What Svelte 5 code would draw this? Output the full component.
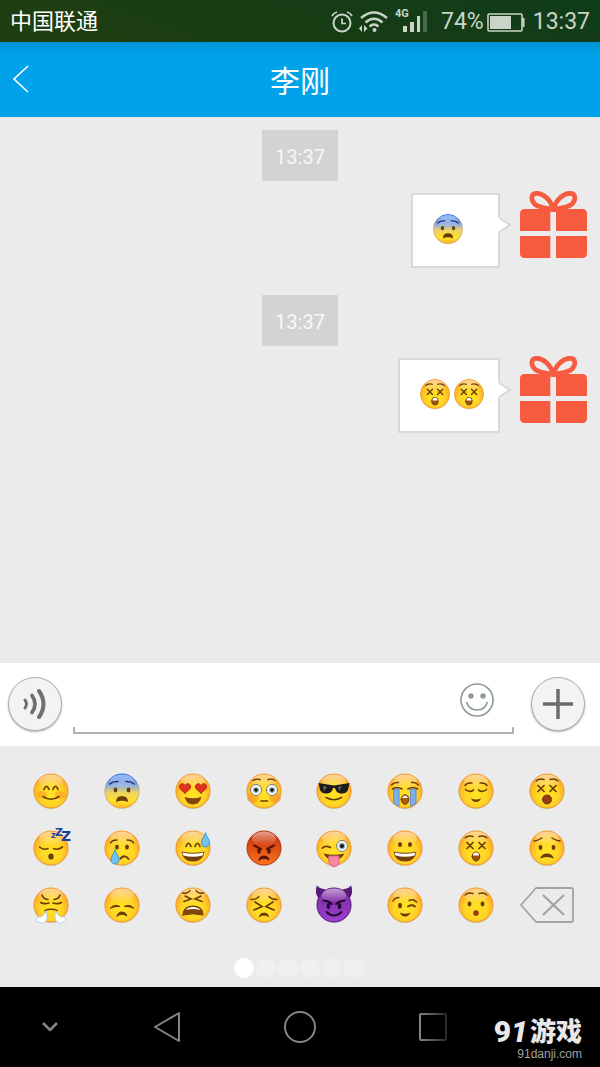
<script>
  const BROWN = "#6b3d06";
  const NAVY = "#2b2f6e";

  const line = (d, stroke = BROWN, width = 1.6) => ({ d, stroke, width });
  const area = (d, fill = BROWN, stroke = "none") => ({ d, fill, stroke, width: 1 });
  const oval = (x, y, rx, ry, fill = BROWN, stroke = "none") =>
    area(`M${x - rx} ${y}a${rx} ${ry} 0 1 0 ${rx * 2} 0a${rx} ${ry} 0 1 0 ${-rx * 2} 0z`, fill, stroke);
  const heart = (x, y) =>
    area(`M${x} ${y + 5}c-4-3-6-4.500-5.500-7c1-3 4-3 5.500-0.500c1.500-2.500 4.500-2.500 5.500 0.500c0.500 2.500-1.500 4-5.500 7z`, "#e2341d", "#b32512");
  const drop = (x, y) =>
    area(`M${x} ${y - 7}c1 4 4 6 4 9.500a4 4.500 0 0 1-8 0c0-3.500 3-5.500 4-9.500z`, "#6fc5f0", "#3a94cf");
  const crosses = () => line("M11 14.500l6 6m0-6l-6 6M23 14.500l6 6m0-6l-6 6", BROWN, 1.7);
  const brows = () => line("M9 10Q12 7 17 8.500M23 8.500Q28 7 31 10", BROWN, 1.4);
  const wideEye = x => [
    oval(x, 19, 5.5, 5.5, "#fff", "#777"),
    oval(x, 19, 3, 3, "#9ab4bb"),
    oval(x, 19, 1.8, 1.8, "#111")
  ];
  const laugh = () => [
    area("M8.500 23.500Q20 26 31.500 23.500Q30 33.500 20 33.500T8.500 23.500z", "#73400a"),
    area("M9.500 24.500Q20 27 30.500 24.500L29.500 27.500Q20 30 10.500 27.500z", "#fff")
  ];

  const faces = {
    blush: [
      oval(11, 24, 5, 4, "#f9802466"), oval(29, 24, 5, 4, "#f9802466"),
      line("M13 18.500Q15.500 12 18 18.500M22 18.500Q24.500 12 27 18.500M12 25.500Q20 31 28 25.500")
    ],
    fearful: [
      line("M8 13Q11 10 16 10.500M24 10.500Q29 10 32 13", NAVY, 1.6),
      oval(13.5, 19, 1.9, 2.4), oval(26.5, 19, 1.9, 2.4),
      area("M14 31Q14 25 20 25T26 31Q20 28.500 14 31z")
    ],
    heart_eyes: [
      heart(12, 17), heart(28, 17),
      area("M11.500 26Q20 28.500 28.500 26Q26.500 33.500 20 33.500T11.500 26z", "#82440c")
    ],
    flushed: [
      oval(9, 27, 6, 5, "#f5752466"), oval(31, 27, 6, 5, "#f5752466"),
      line("M9 9.500Q12 7.500 16 8.500M24 8.500Q28 7.500 31 9.500", BROWN, 1.4),
      ...wideEye(12), ...wideEye(28),
      line("M17 30H23.500")
    ],
    sunglasses: [
      area("M4.500 12Q12 13 20 14.500Q28 13 35.500 12L34 19Q32 23 27 22.500Q22 22 21 17H19Q18 22 13 22.500Q8 23 6 19z", "#1c1c1c"),
      area("M9 15L13 16L10 20z", "#666"), area("M24 16L28 15L25 20z", "#666"),
      line("M12 26.500Q20 31 27.500 26.500")
    ],
    sob: [
      area("M9 18H14V35Q11 34 9 32z", "#7fb0ea", "#5c8bd0"),
      area("M26 18H31V32Q29 34 26 35z", "#7fb0ea", "#5c8bd0"),
      line("M6.500 14Q9 11 13.500 11.500M26.500 11.500Q31 11 33.500 14", BROWN, 1.4),
      line("M7.500 18Q12 15 17 18M23 18Q28 15 32.500 18"),
      oval(20, 28.5, 3.8, 4.8, "#b05a10", BROWN), area("M17 27Q20 22 23 27z", "#fff")
    ],
    relieved: [
      line("M9 14.500Q11 11.500 16 12M24 12Q29 11.500 31 14.500", BROWN, 1.4),
      line("M9.500 18.500Q13.500 22 17.500 19M22.500 19Q26.500 22 30.500 18.500"),
      area("M15 27.500Q20 29.500 25 27.500Q23.500 31 20 31T15 27.500z")
    ],
    dizzy: [brows(), crosses(), oval(20, 28.5, 4.5, 4.5, "#943c0d", BROWN)],
    sleeping: [
      line("M8.500 19Q12.500 22.500 17 20.500M22.500 20.500Q27 22.500 31.500 19"),
      oval(20, 28.5, 2.7, 3.1)
    ],
    cry: [
      line("M8.500 15Q10 12 15 12M25 12Q30 12 31.500 15", BROWN, 1.4),
      oval(15, 19, 1.9, 2.6), oval(25, 19, 1.9, 2.6),
      line("M18.500 30.500Q23 26 26.500 31", BROWN, 2), drop(13, 29)
    ],
    sweat_smile: [
      line("M13 18.500Q15.500 12 18 18.500M22 18.500Q24.500 12 27 18.500"), ...laugh(), drop(32.5, 12)
    ],
    rage: [
      line("M10 17.500L17 21M30 17.500L23 21", "#571208", 2),
      oval(15, 23, 1.8, 2.8, "#571208"), oval(25, 23, 1.8, 2.8, "#571208"),
      area("M15 32Q15.500 28 20 28T25 32Q20 28.500 15 32z", "#571208", "#571208")
    ],
    tongue: [
      line("M8.500 20Q11 17 16.500 19.500", BROWN, 1.8),
      oval(28, 18, 5.5, 5.5, "#fff", "#777"), oval(28, 18, 3.3, 3.3, "#9ab4bb"), oval(28, 18, 2, 2, "#111"),
      area("M9.500 25.500Q20 28 30.500 25.500Q27.500 32 20 32T9.500 25.500z"),
      area("M15 28H25V34A5 4.500 0 0 1 15 34z", "#f789a4", "#dc5f7d")
    ],
    grinning: [oval(15, 16.5, 2, 2.5), oval(25, 16.5, 2, 2.5), ...laugh()],
    astonished: [
      brows(), crosses(),
      oval(20, 28.5, 3.8, 4.5, "#a4500d", BROWN), area("M17 27.500Q17 24.500 20 24.500T23 27.500z", "#fff")
    ],
    worried: [
      line("M7 13Q11 12.500 15 10M25 10Q29 12.500 33 13", BROWN, 1.4),
      oval(13.5, 19.5, 1.9, 2.4), oval(26.5, 19.5, 1.9, 2.4),
      area("M13 30.500Q15 25.500 20 25.500T27 30.500Q20 27.500 13 30.500z")
    ],
    triumph: [
      line("M11 10Q12 14 17 14.500M29 10Q28 14 23 14.500M9.500 17.500Q13 19.500 18 18M30.500 17.500Q27 19.500 22 18"),
      line("M14 25.500Q20 23 26 25.500"),
      area("M15.500 26Q17 34 14 37Q11 40 8.500 37Q4 38 5.500 33.500Q7 31 10 32Q14 30 15.500 26z", "#fff", "#b6cede"),
      area("M24.500 26Q23 34 26 37Q29 40 31.500 37Q36 38 34.500 33.500Q33 31 30 32Q26 30 24.500 26z", "#fff", "#b6cede")
    ],
    disappointed: [
      area("M8.500 23Q12 18.500 18 21.500Q13 21 8.500 23zM31.500 23Q28 18.500 22 21.500Q27 21 31.500 23z", BROWN, BROWN),
      area("M15 31Q16 27 20 27T25 31Q20 27.500 15 31z", BROWN, BROWN)
    ],
    tired: [
      line("M9.500 8Q15 9 17 5.500M30.500 8Q25 9 23 5.500", BROWN, 1.4),
      line("M12 11L18 14L11 16.500M28 11L22 14L29 16.500"),
      area("M10 30Q10 21 20 21T30 30Q20 27.500 10 30z", "#82440c", BROWN),
      area("M12.500 25Q15 22 20 22T27.500 25Q20 23 12.500 25z", "#fff")
    ],
    persevere: [
      line("M7 14.500Q12 15 15 11.500M33 14.500Q28 15 25 11.500", BROWN, 1.4),
      line("M11 17L18 21.500L10 25M29 17L22 21.500L30 25", BROWN, 1.8),
      area("M15.500 31.500Q16 28 20 28T24.500 31.500Q20 28.500 15.500 31.500z", BROWN, BROWN)
    ],
    imp: [
      line("M9.500 15.500Q15 16 18 19M30.500 15.500Q25 16 22 19", "#210630", 1.8),
      oval(14.5, 21, 1.8, 3, "#210630"), oval(25.5, 21, 1.8, 3, "#210630"),
      line("M12.500 27Q20 34 27.500 27", "#210630", 2)
    ],
    wink: [
      line("M8 16Q10 12.500 14 12.500M24 15.500Q28 13.500 31.500 17", BROWN, 1.5),
      oval(15, 20.5, 2, 2.7), line("M23 21.500Q27 19 30 21.500", BROWN, 1.8),
      area("M15 27.500Q20 30 25.500 27.500Q24 31.500 20 31.500T15 27.500z")
    ],
    hushed: [brows(), oval(13.5, 19, 1.9, 2.4), oval(26.5, 19, 1.9, 2.4), oval(20, 28, 2.8, 2.8, "#943c0d")]
  };

  const skins = { fearful: "url(#skin-blue)", rage: "url(#skin-red)", imp: "url(#skin-purple)" };
  const rims = { rage: "#b8370e", imp: "#591782", fearful: "url(#rim-blue)" };

  const messages = [
    { time: "13:37", emojis: ["fearful"] },
    { time: "13:37", emojis: ["astonished", "astonished"] }
  ];

  let draft = "";
  let page = 0;
  const pick = name => {
    draft += `[${name}]`;
  };
  const erase = () => {
    draft = draft.replace(/(\[\w+\]|.)$/, "");
  };
</script>

{#snippet emoji(name)}
  <svg class="emoji" viewBox="0 0 40 40" role="img" aria-label={name}>
    {#if name === "imp"}
      <path d="M3 0Q4 3 10 4L14 6L5 14Q0 8 3 0zM37 0Q36 3 30 4L26 6L35 14Q40 8 37 0z" fill="#5a1a78" />
    {/if}
    <circle cx="20" cy="20.500" r="17.500" fill="#00000022" />
    <circle cx="20" cy="20" r="17" fill={skins[name] || "url(#skin)"} stroke={rims[name] || "#f59a23"} />
    <ellipse cx="20" cy="10.500" rx="12" ry="7" fill="url(#shine)" />
    {#each faces[name] as shape}
      <path
        d={shape.d}
        fill={shape.fill || "none"}
        stroke={shape.stroke}
        stroke-width={shape.width}
        stroke-linecap="round" />
    {/each}
    {#if name === "sleeping"}
      <g class="zzz">
        <text x="20" y="10" font-size="8">z</text>
        <text x="24" y="8" font-size="11">Z</text>
        <text x="30" y="13" font-size="14">Z</text>
      </g>
    {/if}
  </svg>
{/snippet}

<svg class="defs" width="0" height="0" aria-hidden="true">
  <defs>
    <radialGradient id="skin" cx=".5" cy=".6" r=".6">
      <stop offset="0" stop-color="#ffe424" />
      <stop offset=".55" stop-color="#ffd426" />
      <stop offset="1" stop-color="#fba026" />
    </radialGradient>
    <linearGradient id="skin-blue" x2="0" y2="1">
      <stop offset="0" stop-color="#1d67f0" />
      <stop offset=".35" stop-color="#90b0dd" />
      <stop offset=".55" stop-color="#efd261" />
      <stop offset=".8" stop-color="#ffe128" />
      <stop offset="1" stop-color="#fbb72b" />
    </linearGradient>
    <linearGradient id="rim-blue" x2="0" y2="1">
      <stop offset="0" stop-color="#2468e8" />
      <stop offset=".5" stop-color="#d8b483" />
      <stop offset="1" stop-color="#f3a127" />
    </linearGradient>
    <linearGradient id="skin-red" x2="0" y2="1">
      <stop offset="0" stop-color="#c52a0c" />
      <stop offset="1" stop-color="#f9741c" />
    </linearGradient>
    <linearGradient id="skin-purple" x2="0" y2="1">
      <stop offset="0" stop-color="#7a2b9b" />
      <stop offset="1" stop-color="#9c3fd0" />
    </linearGradient>
    <linearGradient id="shine" x2="0" y2="1">
      <stop offset="0" stop-color="#fff" stop-opacity=".55" />
      <stop offset="1" stop-color="#fff" stop-opacity="0" />
    </linearGradient>
    <linearGradient id="fade">
      <stop offset="0" stop-color="#858585" />
      <stop offset="1" stop-color="#2a2a2a" />
    </linearGradient>
  </defs>
</svg>

<div class="phone">
  <div class="status">
    <span class="carrier">中国联通</span>
    <svg class="alarm" width="22" height="22" viewBox="0 0 22 22" fill="none" stroke="currentColor">
      <circle cx="11" cy="12" r="8.500" stroke-width="2" />
      <path d="M11 7.500V12.500H15M1 5Q2.500 2 6 1M16 1Q19.500 2 21 5" stroke-width="1.700" />
    </svg>
    <svg class="wifi" width="30" height="22" viewBox="0 0 30 22" fill="none" stroke="currentColor" stroke-width="2.400">
      <path d="M2 7Q15-4 28 7M6.500 11.500Q15 4 23.500 11.500M10.500 15.500Q15 11.500 19.500 15.500" />
      <circle cx="15.500" cy="19" r="2" fill="currentColor" stroke="none" />
      <path d="M0 17.500L3 14V21zM5 14L8.500 17.500L5 21z" fill="currentColor" stroke="none" />
    </svg>
    <svg class="signal" width="34" height="26" viewBox="0 0 34 26" fill="currentColor">
      <text x="0" y="10" font-size="11" font-weight="bold">4G</text>
      <path d="M8 19h4v6H8zM15 15h4v10h-4zM22 9h3v16h-3z" />
      <path d="M28 4h4v21h-4z" opacity=".3" />
    </svg>
    <span class="percent">74%</span>
    <svg class="battery" width="38" height="19" viewBox="0 0 38 19" fill="none" stroke="currentColor" stroke-width="1.600">
      <rect x="1" y="1" width="34" height="17" rx="1" />
      <path d="M3 3h21v13H3z" fill="currentColor" stroke="none" />
      <path d="M36.500 5v9" stroke-width="2" />
    </svg>
    <span class="clock">13:37</span>
  </div>

  <header>
    <button class="back" aria-label="返回">
      <svg width="16" height="28" viewBox="0 0 16 28" fill="none" stroke="#fff" stroke-width="1.600">
        <path d="M15 1L1 14L15 27" />
      </svg>
    </button>
    <h1>李刚</h1>
  </header>

  <main>
    {#each messages as message}
      <time>{message.time}</time>
      <div class="message">
        <div class="bubble">
          {#each message.emojis as name}
            {@render emoji(name)}
          {/each}
          <svg class="tail" width="13" height="16" viewBox="0 0 13 16">
            <path d="M0 0L12 8L0 16z" fill="#fff" />
            <path d="M1 1L12 8L1 15" fill="none" stroke="#d6d6d6" stroke-width="1.500" />
          </svg>
        </div>
        <svg class="gift" viewBox="0 0 201 201" role="img" aria-label="avatar">
          <g fill="none" stroke="#f75b3f" stroke-width="14">
            <path d="M99 55C92 22 66 6 48 7C32 8 32 28 45 40C56 49 74 52 99 55z" />
            <path d="M101 55C108 22 134 6 152 7C168 8 168 28 155 40C144 49 126 52 101 55z" />
          </g>
          <path
            d="M14 54H91V120H0V68Q0 54 14 54zM108 54H187Q201 54 201 68V120H108zM0 135H91V201H14Q0 201 0 187zM108 135H201V187Q201 201 187 201H108z"
            fill="#f75b3f" />
        </svg>
      </div>
    {/each}
  </main>

  <form class="composer" on:submit|preventDefault>
    <button type="button" class="round" aria-label="语音">
      <svg width="26" height="32" viewBox="0 0 26 32" fill="none" stroke="#707070" stroke-linecap="round">
        <path d="M3 12Q6 16 3 20" stroke-width="3" />
        <path d="M10 7.500Q16 16 10 24.500" stroke-width="3.800" />
        <path d="M17 3Q26 16 17 29" stroke-width="4" />
      </svg>
    </button>
    <div class="field">
      <div class="entry">
        <input type="text" aria-label="消息" bind:value={draft} />
        <button type="button" class="smile" aria-label="表情">
          <svg width="34" height="34" viewBox="0 0 34 34" fill="none" stroke="#8d999d" stroke-width="1.600">
            <circle cx="17" cy="17" r="16" />
            <path d="M6.500 19Q9 27 17 27T27.500 19" />
            <circle cx="11" cy="13" r="2.700" fill="#8d999d" stroke="none" />
            <circle cx="23" cy="13" r="2.700" fill="#8d999d" stroke="none" />
          </svg>
        </button>
      </div>
      <div class="underline"></div>
    </div>
    <button type="button" class="round" aria-label="更多">
      <svg width="32" height="32" viewBox="0 0 32 32" stroke="#6c6c6c" stroke-width="3.500">
        <path d="M16 1V31M1 16H31" />
      </svg>
    </button>
  </form>

  <section class="picker">
    <div class="grid">
      {#each Object.keys(faces) as name}
        <button on:click={() => pick(name)}>{@render emoji(name)}</button>
      {/each}
      <button aria-label="删除" on:click={erase}>
        <svg width="54" height="36" viewBox="0 0 54 36" fill="none" stroke="#a3a3a3" stroke-width="1.800" stroke-linejoin="round">
          <path d="M1 18L16 1H51Q53 1 53 3V33Q53 35 51 35H16z" />
          <path d="M23 8L44 28M44 8L23 28" stroke-width="2.200" />
        </svg>
      </button>
    </div>
    <div class="dots">
      {#each [0, 1, 2, 3, 4, 5] as i}
        <button class:active={page === i} aria-label="第{i + 1}页" on:click={() => (page = i)}></button>
      {/each}
    </div>
  </section>

  <nav>
    <button aria-label="收起">
      <svg width="16" height="10" viewBox="0 0 16 10" stroke-width="2.500"><path d="M1 1L8 8L15 1" /></svg>
    </button>
    <button aria-label="后退">
      <svg width="28" height="32" viewBox="0 0 28 32" stroke-width="2"><path d="M26 2V30L2 16z" /></svg>
    </button>
    <button aria-label="主页">
      <svg width="32" height="32" viewBox="0 0 32 32" stroke-width="2"><circle cx="16" cy="16" r="15" /></svg>
    </button>
    <button aria-label="最近">
      <svg width="28" height="28" viewBox="0 0 28 28" stroke-width="2">
        <rect x="1" y="1" width="26" height="26" rx="1" style:stroke="url(#fade)" />
      </svg>
    </button>
    <div class="watermark">
      <div class="brand"><b>9<i>1</i></b><span>游戏</span></div>
      <div class="site">91danji.com</div>
    </div>
  </nav>
</div>

<style>
  :global(body) {
    margin: 0;
    background: #ebebeb;
  }
  .defs {
    position: absolute;
  }
  .phone {
    display: flex;
    flex-direction: column;
    min-height: 100vh;
    font-family: Roboto, "Noto Sans CJK SC", sans-serif;
  }
  button {
    display: flex;
    align-items: center;
    justify-content: center;
    padding: 0;
    border: 0;
    background: none;
  }
  svg {
    display: block;
    flex: none;
  }

  .status {
    display: flex;
    align-items: center;
    box-sizing: border-box;
    height: 42px;
    padding: 2px 10px 0;
    background: linear-gradient(20deg, #213f10, #173c14 50%, #103c1b);
    color: #c9d5c8;
    font-size: 23px;
    line-height: 40px;
  }
  .carrier {
    flex: 1;
    color: #fff;
    font-size: 22px;
  }
  .wifi {
    margin-left: 6px;
  }
  .signal {
    margin: 0 12px 4px 6px;
  }
  .battery {
    margin: 0 8px 0 3px;
  }

  header {
    display: grid;
    grid-template-columns: 60px 1fr 60px;
    align-items: center;
    height: 75px;
    background: linear-gradient(#0093d8, #00a2e9 16px);
  }
  .back {
    justify-content: flex-start;
    height: 75px;
    padding: 0 0 2px 13px;
  }
  h1 {
    margin: 0;
    padding-top: 4px;
    color: #fff;
    font-size: 30px;
    font-weight: 400;
    line-height: 40px;
    text-align: center;
  }

  main {
    flex: 1;
    display: flex;
    flex-direction: column;
    padding: 13px 13px 0;
    background: #ebebeb;
  }
  time {
    align-self: center;
    padding: 3px 13px 0;
    background: #d3d3d3;
    color: #f8f8f8;
    font-size: 20px;
    line-height: 48px;
  }
  .message {
    display: flex;
    justify-content: flex-end;
    align-items: flex-start;
    gap: 20px;
    margin: 10px 0 27px;
  }
  .bubble {
    position: relative;
    display: flex;
    align-items: center;
    box-sizing: border-box;
    min-width: 89px;
    height: 75px;
    margin-top: 2px;
    padding: 0 12px 3px 18px;
    border: 2px solid #d9d9d9;
    background: #fff;
  }
  .bubble .emoji {
    width: 34px;
    height: 34px;
  }
  .tail {
    position: absolute;
    top: 22px;
    right: -13px;
  }
  .gift {
    width: 67px;
    height: 67px;
  }
  .emoji {
    width: 40px;
    height: 40px;
    overflow: visible;
  }
  .zzz {
    fill: #1d3f94;
    font-family: "DejaVu Sans", sans-serif;
    font-weight: bold;
  }

  .composer {
    display: flex;
    align-items: center;
    gap: 11px;
    box-sizing: border-box;
    height: 83px;
    padding: 0 15px 2px 8px;
    background: #fff;
  }
  .round {
    flex: none;
    width: 54px;
    height: 54px;
    border: 1px solid #b0b0b0;
    border-radius: 50%;
    background: #f3f3f3;
    box-shadow: 0 1px 2px #aaa;
  }
  .composer .round:last-child {
    margin-left: 6px;
  }
  .field {
    flex: 1;
    align-self: flex-end;
    padding-bottom: 10px;
  }
  .entry {
    display: flex;
    align-items: center;
    height: 54px;
    padding: 0 20px 0 10px;
  }
  .entry input {
    flex: 1;
    min-width: 0;
    border: 0;
    outline: 0;
    background: none;
    font: 22px Roboto, "Noto Sans CJK SC", sans-serif;
  }
  .underline {
    height: 5px;
    border: 2px solid #b2b2b2;
    border-top: 0;
  }

  .picker {
    padding: 16px 18px 9px 16px;
    background: #ebebeb;
  }
  .grid {
    display: grid;
    grid-template-columns: repeat(8, 1fr);
    grid-auto-rows: 57px;
  }
  .dots {
    display: flex;
    justify-content: center;
    gap: 2px;
    margin-top: 25px;
  }
  .dots button {
    width: 20px;
    height: 20px;
    border-radius: 50%;
    background: #efefef;
  }
  .dots .active {
    background: #fff;
  }

  nav {
    position: relative;
    display: grid;
    grid-template-columns: 100fr 133fr 133fr 133fr 101fr;
    height: 80px;
    background: #000;
  }
  nav svg {
    fill: none;
    stroke: #858585;
    stroke-linejoin: round;
  }
  .watermark {
    position: absolute;
    top: 31px;
    right: 18px;
    color: #e8e8e8;
    text-align: right;
  }
  .brand {
    display: flex;
    align-items: center;
    justify-content: flex-end;
    gap: 2px;
    height: 28px;
    font-size: 26px;
    font-weight: 900;
    line-height: 28px;
  }
  .brand b {
    font-size: 30px;
    font-weight: 900;
  }
  .site {
    color: #a0a0a0;
    font: 12px/16px "Liberation Sans", sans-serif;
  }
</style>
